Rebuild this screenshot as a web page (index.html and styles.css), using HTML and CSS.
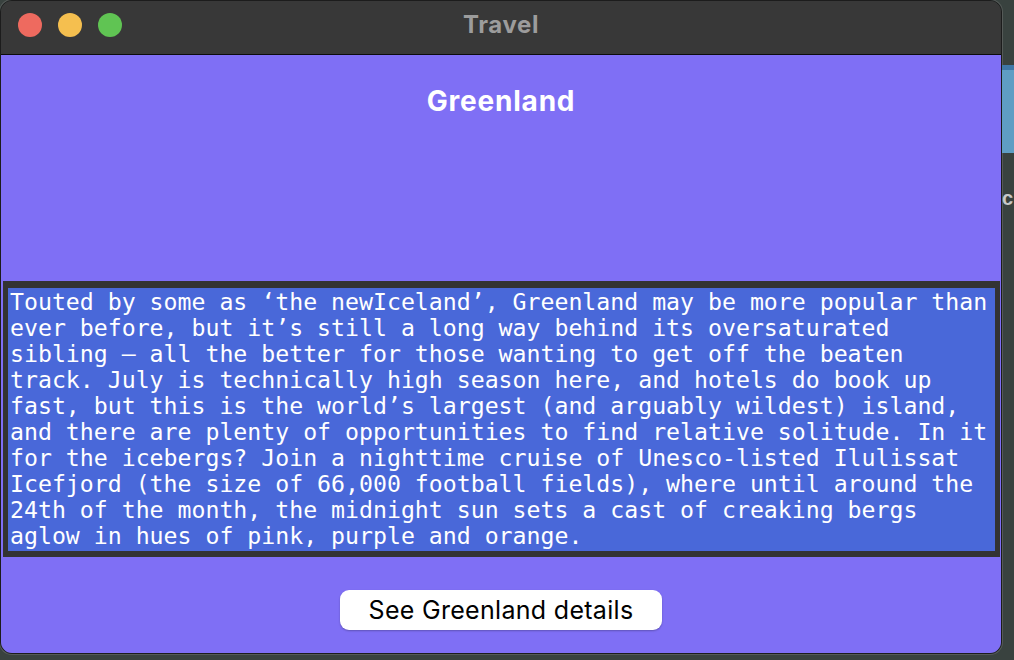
FILE: index.html
```html
<!DOCTYPE html>
<html>
<head>
<meta charset="utf-8">
<link rel="stylesheet" href="styles.css">
</head>
<body>
<div class="desk">
  <div class="window">
    <div class="titlebar">
      <div class="lights">
        <span class="light red"></span>
        <span class="light yellow"></span>
        <span class="light green"></span>
      </div>
      <div class="title">Travel</div>
    </div>
    <div class="content">
      <div class="header"><h1 class="heading">Greenland</h1></div>
      <div class="textbox">
        <div class="textinner">Touted by some as ‘the newIceland’, Greenland may be more popular than<br>ever before, but it’s still a long way behind its oversaturated<br>sibling – all the better for those wanting to get off the beaten<br>track. July is technically high season here, and hotels do book up<br>fast, but this is the world’s largest (and arguably wildest) island,<br>and there are plenty of opportunities to find relative solitude. In it<br>for the icebergs? Join a nighttime cruise of Unesco-listed Ilulissat<br>Icefjord (the size of 66,000 football fields), where until around the<br>24th of the month, the midnight sun sets a cast of creaking bergs<br>aglow in hues of pink, purple and orange.</div>
      </div>
      <div class="actions"><button class="btn">See Greenland details</button></div>
    </div>
  </div>
  <div class="side">
    <div class="side-widget"></div>
    <div class="side-text">c</div>
  </div>
</div>
</body>
</html>
```
FILE: styles.css
```css
html, body {
  margin: 0;
  padding: 0;
  width: 1014px;
  height: 660px;
  overflow: hidden;
  background: #39423f;
}
.desk {
  display: flex;
  align-items: flex-start;
  height: 660px;
}
.window {
  width: 1000px;
  height: 652px;
  border: 1px solid #1c1c1c;
  border-radius: 12px;
  overflow: hidden;
  display: flex;
  flex-direction: column;
  flex: none;
  box-shadow: 0 0 0 1px #555a58;
}
.titlebar {
  height: 53px;
  background: #383838;
  border-bottom: 1px solid #0c0c0c;
  position: relative;
  display: flex;
  align-items: center;
  justify-content: center;
  flex: none;
}
.lights {
  position: absolute;
  left: 17px;
  top: 12px;
  display: flex;
  gap: 16px;
}
.light {
  width: 24px;
  height: 24px;
  border-radius: 50%;
  display: block;
}
.red { background: #ee6a5f; }
.yellow { background: #f5bf4f; }
.green { background: #60c453; }
.title {
  font-family: Inter, "Liberation Sans", sans-serif;
  font-weight: 700;
  font-size: 24px;
  letter-spacing: 0.6px;
  color: #9c9c9c;
  margin-top: -6px;
}
.content {
  flex: 1;
  background: #7f6ff5;
  display: flex;
  flex-direction: column;
}
.header {
  height: 226px;
  flex: none;
}
.heading {
  margin: 0;
  padding-top: 29px;
  text-align: center;
  font-family: Inter, "Liberation Sans", sans-serif;
  font-weight: 700;
  font-size: 28px;
  letter-spacing: 0.8px;
  line-height: 34px;
  color: #ffffff;
}
.textbox {
  margin: 0 1px 0 2px;
  border: 5px solid #333333;
  border-top-width: 7px;
  border-bottom-width: 6px;
  background: #4968d9;
  flex: none;
}
.textinner {
  padding: 1px 0 2px 2px;
  font-family: "DejaVu Sans Mono", monospace;
  font-size: 23.2px;
  line-height: 26px;
  color: #ffffff;
  white-space: nowrap;
}
.actions {
  display: flex;
  justify-content: center;
  padding-top: 33px;
}
.btn {
  width: 322px;
  height: 40px;
  background: #ffffff;
  border: none;
  border-radius: 9px;
  box-shadow: 0 1px 2px rgba(0,0,0,0.25);
  font-family: Inter, "Liberation Sans", sans-serif;
  font-size: 25px;
  letter-spacing: 0.3px;
  color: #000000;
  padding: 0;
}
.side {
  flex: 1;
  display: flex;
  flex-direction: column;
  padding-top: 65px;
}
.side-widget {
  height: 88px;
  background: #5f9ec4;
  border-top: 5px solid #3f78a8;
  box-sizing: border-box;
}
.side-text {
  margin-top: 34px;
  font-family: "Liberation Sans", sans-serif;
  font-weight: 700;
  font-size: 20px;
  color: #c8c8c8;
}
```
